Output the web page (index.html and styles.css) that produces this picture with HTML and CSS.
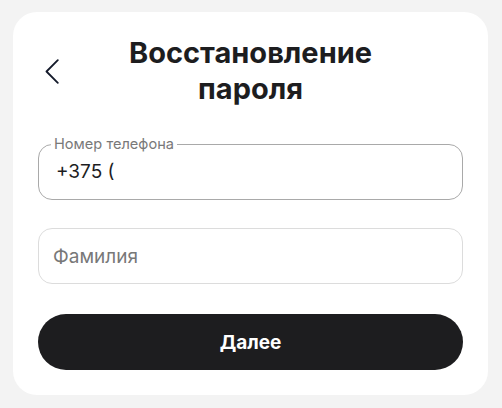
FILE: index.html
```html
<!DOCTYPE html>
<html lang="ru">
<head>
<meta charset="utf-8">
<title>Восстановление пароля</title>
<link rel="stylesheet" href="styles.css">
</head>
<body>
<main class="card">
  <header class="head">
    <button class="back" type="button" aria-label="Назад">
      <svg width="14" height="25" viewBox="0 0 14 25" aria-hidden="true">
        <path d="M12.8 1.2 L1.5 12.5 L12.8 23.8" fill="none" stroke="#141a2b" stroke-width="1.8" stroke-linecap="round" stroke-linejoin="round"/>
      </svg>
    </button>
    <h1 class="title">Восстановление<br>пароля</h1>
    <span class="spacer"></span>
  </header>
  <form class="form">
    <fieldset class="field">
      <legend class="legend">Номер телефона</legend>
      <input class="field-input" type="text" value="+375 (">
    </fieldset>
    <input class="plain-input" type="text" placeholder="Фамилия">
    <button class="submit" type="button">Далее</button>
  </form>
</main>
</body>
</html>
```

FILE: styles.css
```css
* { box-sizing: border-box; }
html, body { margin: 0; }
body {
  background: #f3f3f3;
  font-family: Inter, "Noto Sans", sans-serif;
  color: #1d1d1f;
  padding: 12px 14px 13px 13px;
}
.card {
  background: #ffffff;
  border-radius: 24px;
  padding: 23px 25px 25px;
  height: 383px;
}
.head {
  display: grid;
  grid-template-columns: 40px 1fr 40px;
  align-items: center;
}
.back {
  border: 0;
  background: none;
  padding: 0 0 0 7px;
  margin: 0;
  display: flex;
  align-items: center;
  cursor: pointer;
}
.title {
  margin: 0;
  text-align: center;
  font-size: 29px;
  line-height: 36px;
  font-weight: 700;
  color: #1d1d1f;
}
.form {
  display: flex;
  flex-direction: column;
  margin-top: 28px;
}
.field {
  margin: 0;
  border: 1px solid #a9a9a9;
  border-radius: 14px;
  padding: 0 17px 15px;
  height: 65px;
}
.legend {
  margin-left: -5px;
  padding: 0 3px;
  font-size: 14.6px;
  line-height: 18px;
  color: #797979;
}
.field-input {
  display: block;
  width: 100%;
  border: 0;
  outline: none;
  padding: 0;
  margin-top: 6px;
  height: 24px;
  font-family: inherit;
  font-size: 19px;
  color: #1d1d1f;
  background: transparent;
}
.plain-input {
  margin-top: 28px;
  height: 56px;
  border: 1px solid #dcdcdc;
  border-radius: 14px;
  padding: 0 14px;
  font-family: inherit;
  font-size: 19px;
  color: #1d1d1f;
  outline: none;
}
.plain-input::placeholder { color: #787878; }
.submit {
  margin-top: 30px;
  height: 56px;
  border: 0;
  border-radius: 28px;
  background: #1d1d1f;
  color: #ffffff;
  font-family: inherit;
  font-size: 19px;
  font-weight: 700;
  cursor: pointer;
}
```
